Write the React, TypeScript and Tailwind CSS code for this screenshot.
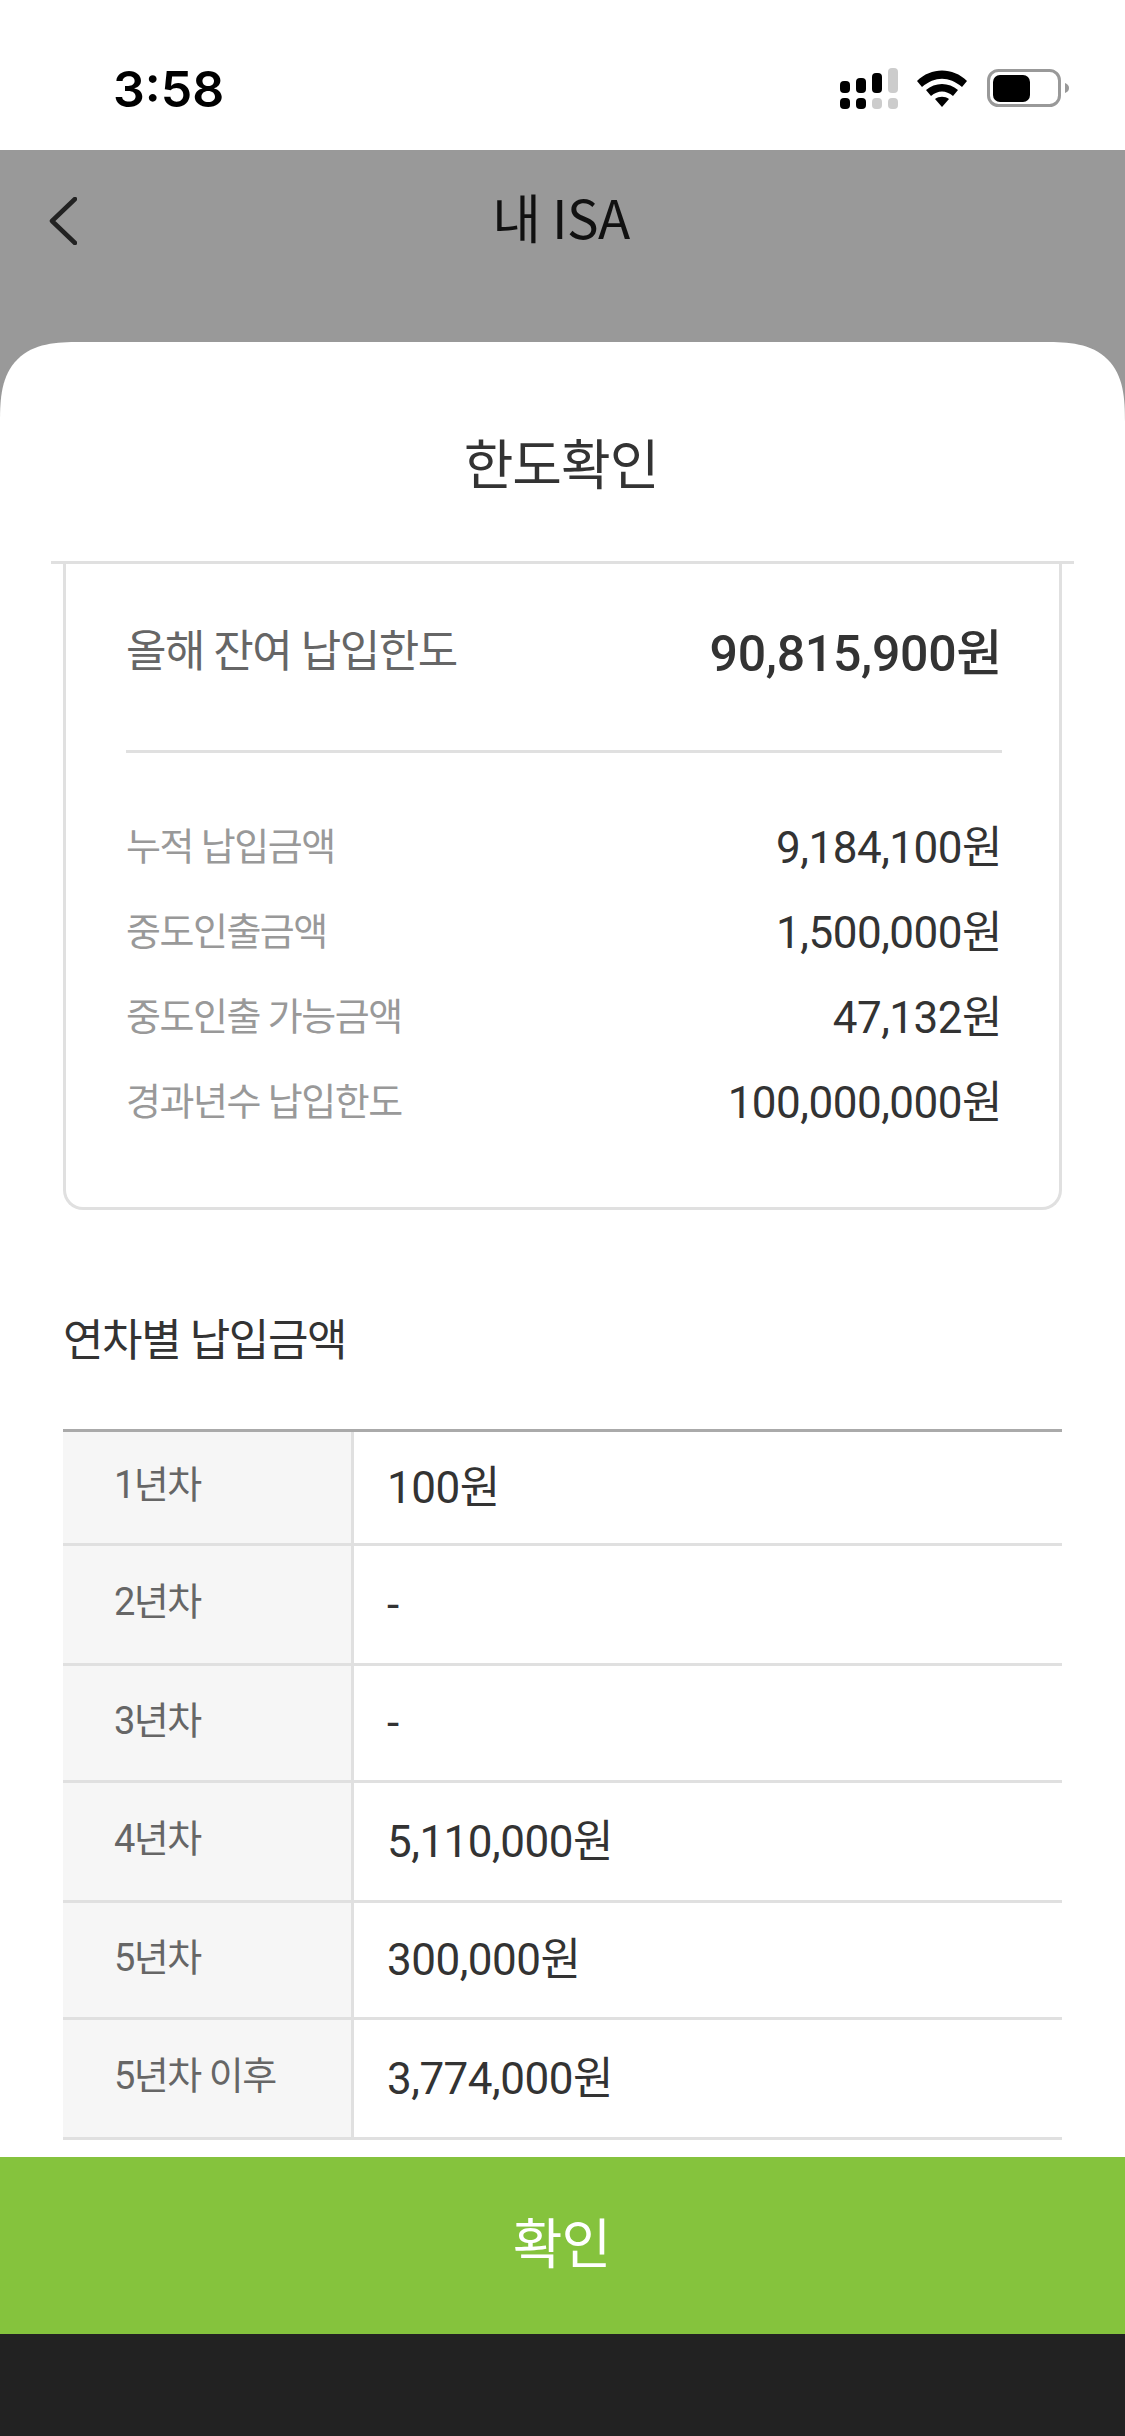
const summaryRows = [
  { label: "누적 납입금액", value: "9,184,100원" },
  { label: "중도인출금액", value: "1,500,000원" },
  { label: "중도인출 가능금액", value: "47,132원" },
  { label: "경과년수 납입한도", value: "100,000,000원" },
]

const yearRows = [
  { label: "1년차", value: "100원", height: "h-[114px]" },
  { label: "2년차", value: "-", height: "h-[120px]" },
  { label: "3년차", value: "-", height: "h-[117px]" },
  { label: "4년차", value: "5,110,000원", height: "h-[120px]" },
  { label: "5년차", value: "300,000원", height: "h-[117px]" },
  { label: "5년차 이후", value: "3,774,000원", height: "h-[120px]" },
]

function SignalIcon() {
  return (
    <svg width="58" height="56" viewBox="0 0 58 56" className="mr-[19px]">
      <rect x="0" y="13" width="10" height="12" rx="4" fill="#000" />
      <rect x="16" y="10" width="10" height="15" rx="4" fill="#000" />
      <rect x="32" y="5" width="10" height="20" rx="4" fill="#000" />
      <rect x="48" y="0" width="10" height="25" rx="4" fill="#ccc" />
      <rect x="0" y="30" width="10" height="11" rx="4" fill="#000" />
      <rect x="16" y="30" width="10" height="11" rx="4" fill="#000" />
      <rect x="32" y="30" width="10" height="11" rx="4" fill="#ccc" />
      <rect x="48" y="30" width="10" height="11" rx="4" fill="#ccc" />
    </svg>
  )
}

function WifiIcon() {
  return (
    <svg width="50" height="37" viewBox="0 0 50 37" className="mr-[20px] mt-[2px]">
      <path d="M0 11 C14 -3 36 -3 50 11 L45 17 C32 6 18 6 5 17 Z" fill="#000" />
      <path d="M9 20 C18 12 32 12 41 20 L36 26 C29 20 21 20 14 26 Z" fill="#000" />
      <path d="M18 29 C22 26 28 26 32 29 L25 37 Z" fill="#000" />
    </svg>
  )
}

function BatteryIcon() {
  return (
    <svg width="82" height="38" viewBox="0 0 82 38" className="mt-[1px]">
      <rect x="1.5" y="1.5" width="71" height="35" rx="10" fill="#fff" stroke="#999" strokeWidth="3" />
      <rect x="6" y="6" width="37" height="27" rx="7" fill="#000" />
      <path d="M78 14 C81 15 82 17 82 19 C82 21 81 23 78 24 Z" fill="#999" />
    </svg>
  )
}

export default function App() {
  return (
    <div className="flex h-[2436px] w-[1125px] flex-col overflow-hidden bg-[#999999] font-[family-name:Roboto,'Noto_Sans_CJK_KR',sans-serif] text-[#333333]">
      {/* Status bar */}
      <div className="flex h-[150px] shrink-0 items-center justify-between bg-white pl-[113px] pr-[56px] pt-[28px]">
        <span className="font-[family-name:Inter,sans-serif] text-[50px] font-semibold leading-none text-black">3:58</span>
        <div className="flex items-start pt-[14px]">
          <SignalIcon />
          <WifiIcon />
          <BatteryIcon />
        </div>
      </div>

      {/* Header */}
      <div className="grid h-[192px] shrink-0 grid-cols-3 items-start">
        <div className="flex h-[138px] items-center pl-[49px] pt-[3px]">
          <svg width="28" height="48" viewBox="0 0 28 48" fill="none">
            <path d="M26 2 L3 24 L26 46" stroke="#222" strokeWidth="4.5" strokeLinecap="round" strokeLinejoin="round" />
          </svg>
        </div>
        <div className="flex h-[138px] items-center justify-center pb-[5px] pr-[3px] font-[family-name:'Noto_Sans_CJK_KR',sans-serif] text-[53px] tracking-[-0.5px] text-[#111111]">
          내 ISA
        </div>
      </div>

      {/* Sheet */}
      <div className="flex min-h-0 flex-1 flex-col rounded-t-[80px] bg-white [corner-shape:superellipse(1.5)]">
        <div className="mx-[51px] flex h-[222px] shrink-0 items-center justify-center border-b-[3px] border-[#e0e0e0] pr-[3px] pt-[20px] font-[family-name:'Noto_Sans_CJK_KR',sans-serif] text-[54px] tracking-[-1px]">
          한도확인
        </div>

        <div className="min-h-0 flex-1 overflow-hidden px-[63px]">
          {/* Limit card */}
          <div className="rounded-b-[20px] border-x-[3px] border-b-[3px] border-[#e0e0e0] pl-[60px] pr-[57px] pb-[62px]">
            <div className="flex h-[189px] items-center justify-between border-b-[3px] border-[#e0e0e0] pb-[11px]">
              <span className="text-[44px] tracking-[-1.5px] text-[#666666]">올해 잔여 납입한도</span>
              <span className="pt-[5px] text-[50px] font-medium tracking-[-0.3px]">90,815,900원</span>
            </div>
            <div className="flex flex-col pt-[52px]">
              {summaryRows.map((row) => (
                <div key={row.label} className="flex h-[85px] items-center justify-between">
                  <span className="text-[38px] tracking-[-1.5px] text-[#999999]">{row.label}</span>
                  <span className="text-[44px] tracking-[-0.5px]">{row.value}</span>
                </div>
              ))}
            </div>
          </div>

          <h2 className="mt-[98px] mb-[55px] flex h-[66px] items-center text-[44px] font-normal tracking-[-1.4px]">연차별 납입금액</h2>

          {/* Yearly amounts */}
          <div className="border-t-[3px] border-[#aaaaaa]">
            {yearRows.map((row) => (
              <div key={row.label} className={`flex border-b-[3px] border-[#e0e0e0] ${row.height}`}>
                <div className="flex w-[291px] shrink-0 items-center border-r-[3px] border-[#e0e0e0] bg-[#f6f6f6] pb-[4px] pl-[51px] text-[38px] tracking-[-1.5px] text-[#666666]">
                  {row.label}
                </div>
                <div className="flex flex-1 items-center pl-[33px] text-[44px] tracking-[-0.5px]">{row.value}</div>
              </div>
            ))}
          </div>
        </div>

        {/* Confirm */}
        <button className="flex h-[177px] shrink-0 items-center justify-center bg-[#85c33d] pr-[2px] text-[54px] tracking-[-1px] text-white">확인</button>
        <div className="h-[102px] shrink-0 bg-[#222222]" />
      </div>
    </div>
  )
}
